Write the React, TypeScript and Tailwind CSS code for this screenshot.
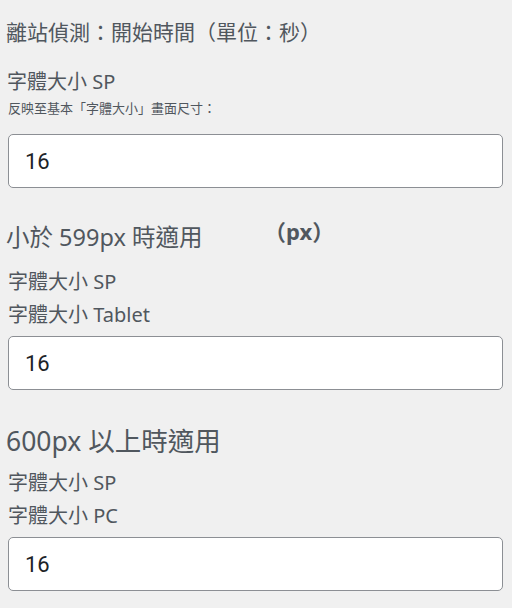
const font = { fontFamily: '"Noto Sans", "Noto Sans CJK TC", sans-serif' };

function SizeInput({ className = "" }: { className?: string }) {
  return (
    <input
      type="text"
      defaultValue="16"
      className={`ml-[2px] block w-[495px] h-[54px] rounded-[5px] border border-[#8c8f94] bg-white pl-[16px] text-[22px] text-[#1d2327] outline-none ${className}`}
      style={{ fontFamily: 'Roboto, "Noto Sans", sans-serif' }}
    />
  );
}

export default function App() {
  return (
    <div
      className="w-[512px] h-[608px] overflow-hidden bg-[#f0f0f0] text-[#50575e] pl-[6px]"
      style={font}
    >
      {/* detection */}
      <h2 className="pt-[18px] text-[21px] leading-[28px]">離站偵測：開始時間（單位：秒）</h2>

      <div className="mt-[22px] ml-[1px] text-[20px] leading-[28px]">字體大小 SP</div>
      <p className="mt-[3px] ml-[2px] text-[13px] leading-[18px]">反映至基本「字體大小」畫面尺寸：</p>
      <SizeInput className="mt-[17px]" />

      {/* under 599px */}
      <div className="relative mt-[33px]">
        <h3 className="text-[23.5px] leading-[32px]">小於 599px 時適用</h3>
        <span className="absolute left-[258px] top-[-6px] text-[22px] font-bold leading-[32px]">（px）</span>
      </div>
      <div className="mt-[15px] ml-[2px] text-[20px] leading-[28px]">字體大小 SP</div>
      <div className="mt-[5px] ml-[2px] text-[20px] leading-[28px]">字體大小 Tablet</div>
      <SizeInput className="mt-[7px]" />

      {/* 600px and up */}
      <h3 className="mt-[34px] text-[26.5px] leading-[34px]">600px 以上時適用</h3>
      <div className="mt-[11px] ml-[2px] text-[20px] leading-[28px]">字體大小 SP</div>
      <div className="mt-[5px] ml-[2px] text-[20px] leading-[28px]">字體大小 PC</div>
      <SizeInput className="mt-[7px]" />
    </div>
  );
}
